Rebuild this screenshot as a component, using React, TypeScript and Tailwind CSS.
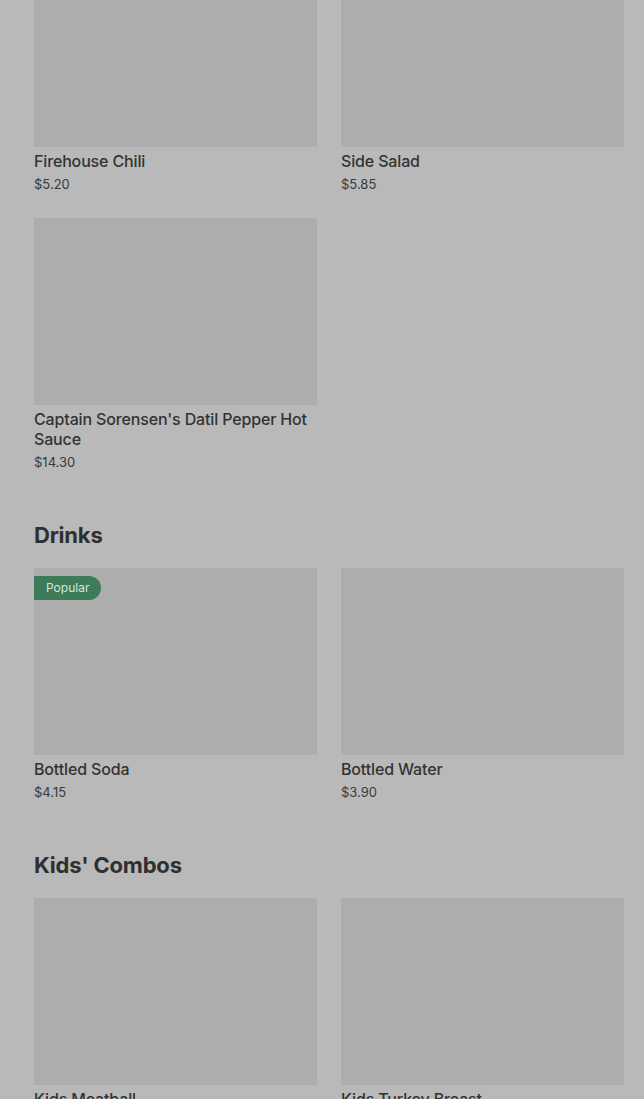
import React from "react";

type Item = { name: string; price: string; popular?: boolean };

function Card({ item }: { item: Item }) {
  return (
    <div className="flex flex-col">
      <div className="relative h-[187px] w-full bg-[#adadad]">
        {item.popular && (
          <span className="absolute left-0 top-2 flex h-6 items-center rounded-r-full bg-[#3e7b58] pl-3 pr-3 text-[12px] text-[#d5e6dc]">
            Popular
          </span>
        )}
      </div>
      <div className="mt-[4px] text-[16px] font-medium leading-5 tracking-[-0.15px] text-[#333333]">
        {item.name}
      </div>
      <div className="mt-[3px] text-[13px] leading-5 text-[#3a3a3a]">{item.price}</div>
    </div>
  );
}

function Grid({ items }: { items: Item[] }) {
  return (
    <div className="grid grid-cols-2 gap-x-6 gap-y-6">
      {items.map((it) => (
        <Card key={it.name} item={it} />
      ))}
    </div>
  );
}

function Section({ title, items }: { title: string; items: Item[] }) {
  return (
    <section className="mt-[49px]">
      <h2 className="mb-[19px] text-[22px] font-bold leading-7 tracking-[-0.2px] text-[#2f2f2f]">
        {title}
      </h2>
      <Grid items={items} />
    </section>
  );
}

export default function App() {
  return (
    <div
      className="h-[1099px] overflow-hidden bg-[#b9b9b9] pl-[34px] pr-[20px]"
      style={{ fontFamily: "Inter, 'Liberation Sans', sans-serif" }}
    >
      <div className="mt-[-40px]">
        <Grid
          items={[
            { name: "Firehouse Chili", price: "$5.20" },
            { name: "Side Salad", price: "$5.85" },
            { name: "Captain Sorensen's Datil Pepper Hot Sauce", price: "$14.30" },
          ]}
        />
        <Section
          title="Drinks"
          items={[
            { name: "Bottled Soda", price: "$4.15", popular: true },
            { name: "Bottled Water", price: "$3.90" },
          ]}
        />
        <Section
          title="Kids' Combos"
          items={[
            { name: "Kids Meatball", price: "$6.50" },
            { name: "Kids Turkey Breast", price: "$6.50" },
          ]}
        />
      </div>
    </div>
  );
}
